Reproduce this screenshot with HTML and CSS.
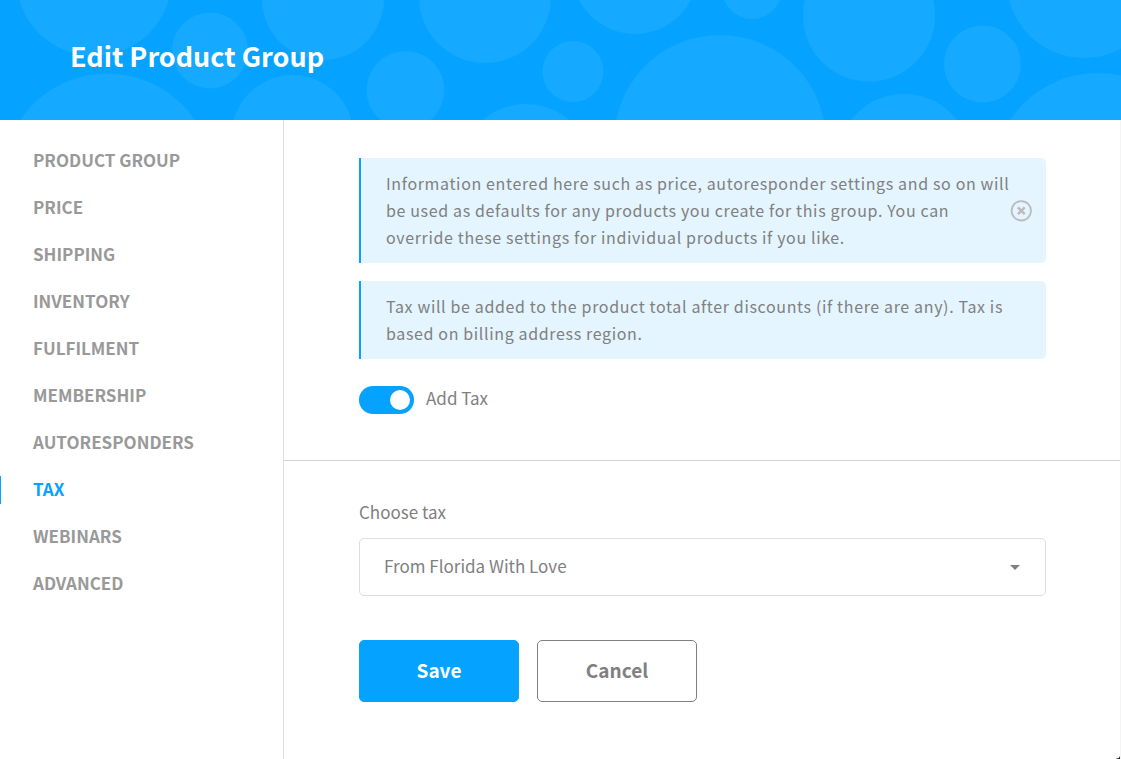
FILE: index.html
```html
<!DOCTYPE html>
<html lang="en">
<head>
    <meta charset="UTF-8">
    <meta name="viewport" content="width=device-width, initial-scale=1.0">
    <title>Edit Product Group</title>
    <link rel="stylesheet" href="styles.css">
</head>
<body>

    <div class="page">
        <header class="header">
            <svg class="bubbles" width="1121" height="120" aria-hidden="true">
                <circle cx="94" cy="-22" r="78"/>
                <circle cx="210" cy="50.5" r="38"/>
                <circle cx="323" cy="-1" r="61"/>
                <circle cx="107.5" cy="179" r="105.5"/>
                <circle cx="292.5" cy="136" r="61"/>
                <circle cx="405.5" cy="90" r="39"/>
                <circle cx="485" cy="-3" r="66"/>
                <circle cx="526" cy="170" r="66"/>
                <circle cx="573" cy="71.5" r="30.5"/>
                <circle cx="635" cy="-29" r="63"/>
                <circle cx="720" cy="141" r="106"/>
                <circle cx="752" cy="-11" r="30"/>
                <circle cx="869" cy="15.5" r="66"/>
                <circle cx="904" cy="161" r="67"/>
                <circle cx="982.5" cy="64" r="38.5"/>
                <circle cx="1084" cy="-19.5" r="77.5"/>
                <circle cx="1098" cy="179" r="106"/>
            </svg>
            <h1>Edit Product Group</h1>
        </header>

        <div class="content">
            <nav class="sidebar">
                <a href="#">Product Group</a>
                <a href="#">Price</a>
                <a href="#">Shipping</a>
                <a href="#">Inventory</a>
                <a href="#">Fulfilment</a>
                <a href="#">Membership</a>
                <a href="#">Autoresponders</a>
                <a href="#" class="active" aria-current="page">Tax</a>
                <a href="#">Webinars</a>
                <a href="#">Advanced</a>
            </nav>

            <form class="main">
                <section class="section">
                    <div class="info">
                        <p>Information entered here such as price, autoresponder settings and so on will be used as defaults for any products you create for this group. You can override these settings for individual products if you like.</p>
                        <button type="button" class="close" aria-label="Close">
                            <svg width="22" height="22" viewBox="0 0 22 22" fill="none">
                                <circle cx="11.3" cy="10.8" r="9.7" stroke-width="1.8"/>
                                <path d="M7.9 7.4l6.8 6.8M14.7 7.4l-6.8 6.8" stroke-width="2.4"/>
                            </svg>
                        </button>
                    </div>
                    <div class="info">
                        <p>Tax will be added to the product total after discounts (if there are any). Tax is based on billing address region.</p>
                    </div>
                    <label class="toggle">
                        <input type="checkbox" checked>
                        <span>Add Tax</span>
                    </label>
                </section>

                <section class="section">
                    <label class="field-label" for="tax">Choose tax</label>
                    <div class="select">
                        <select id="tax">
                            <option>From Florida With Love</option>
                        </select>
                        <svg width="10" height="5" viewBox="0 0 10 5" aria-hidden="true">
                            <path d="M0 0h10L5 5z"/>
                        </svg>
                    </div>
                    <div class="buttons">
                        <button type="submit" class="btn btn-primary">Save</button>
                        <button type="button" class="btn">Cancel</button>
                    </div>
                </section>
            </form>
        </div>
    </div>

</body>
</html>
```
FILE: styles.css
```css
* {
    box-sizing: border-box;
}
html {
    background: #222;
}
body {
    margin: 0;
    font-family: "Noto Sans CJK SC", "Open Sans", sans-serif;
    font-size: 17px;
    color: #808080;
}
.page {
    min-height: 100vh;
    display: flex;
    flex-direction: column;
    background: #fff;
    border-bottom-right-radius: 6px;
}
.header {
    position: relative;
    height: 120px;
    padding: 0 70px 8px;
    display: flex;
    align-items: center;
    background: #05a3ff;
    overflow: hidden;
}
.bubbles {
    position: absolute;
    top: 0;
    left: 0;
    fill: #15a9ff;
}
.header h1 {
    position: relative;
    margin: 0;
    font-size: 27px;
    line-height: 40px;
    color: #fff;
}
.content {
    flex: 1;
    display: flex;
}
.sidebar {
    width: 284px;
    padding-top: 27px;
    display: flex;
    flex-direction: column;
    gap: 19px;
    border-right: 1px solid #ddd;
}
.sidebar a {
    padding: 0 0 2px 32px;
    border-left: 1px solid transparent;
    line-height: 26px;
    font-weight: bold;
    color: #999;
    text-decoration: none;
    text-transform: uppercase;
}
.sidebar .active {
    color: #05a3ff;
    border-left-color: #05a3ff;
}
.main {
    flex: 1;
    border-right: 1px solid #f4f4f4;
}
.section {
    padding: 38px 74px 46px 75px;
}
.section + .section {
    border-top: 1px solid #d2d2d2;
}
.info {
    display: flex;
    align-items: center;
    margin-bottom: 18px;
    padding: 12px 14px 12px 25px;
    background: #e4f5ff;
    border-left: 2px solid #05a3ff;
    border-radius: 0 5px 5px 0;
}
.info p {
    flex: 1;
    margin: 0;
    font-size: 16px;
    line-height: 27px;
    letter-spacing: 0.04em;
}
.close {
    display: flex;
    padding: 0;
    border: none;
    background: none;
    cursor: pointer;
}
.close svg {
    stroke: #bbb;
}
.toggle {
    display: flex;
    align-items: center;
    gap: 12px;
    margin-top: 27px;
}
.toggle span {
    padding-bottom: 4px;
    line-height: 24px;
}
.toggle input {
    appearance: none;
    width: 55px;
    height: 28px;
    margin: 0;
    padding: 4px;
    display: flex;
    border-radius: 14px;
    background: #ccc;
    cursor: pointer;
}
.toggle input::before {
    content: "";
    width: 20px;
    height: 20px;
    border-radius: 50%;
    background: #fff;
}
.toggle input:checked {
    justify-content: flex-end;
    background: #05a3ff;
}
.field-label {
    display: block;
    margin-bottom: 13px;
    line-height: 26px;
}
.select {
    display: grid;
    align-items: center;
}
.select select,
.select svg {
    grid-area: 1 / 1;
}
.select select {
    appearance: none;
    width: 100%;
    height: 58px;
    padding: 0 50px 4px 24px;
    border: 1px solid #ddd;
    border-radius: 5px;
    background: #fff;
    font: inherit;
    color: inherit;
}
.select svg {
    justify-self: end;
    margin-right: 26px;
    fill: #808080;
    pointer-events: none;
}
.buttons {
    display: flex;
    gap: 18px;
    margin-top: 44px;
}
.btn {
    width: 160px;
    height: 62px;
    padding: 0 0 4px;
    border: 1px solid #808080;
    border-radius: 5px;
    background: #fff;
    font-family: inherit;
    font-size: 19px;
    font-weight: bold;
    color: #808080;
    cursor: pointer;
}
.btn-primary {
    border-color: #05a3ff;
    background: #05a3ff;
    color: #fff;
}
```
